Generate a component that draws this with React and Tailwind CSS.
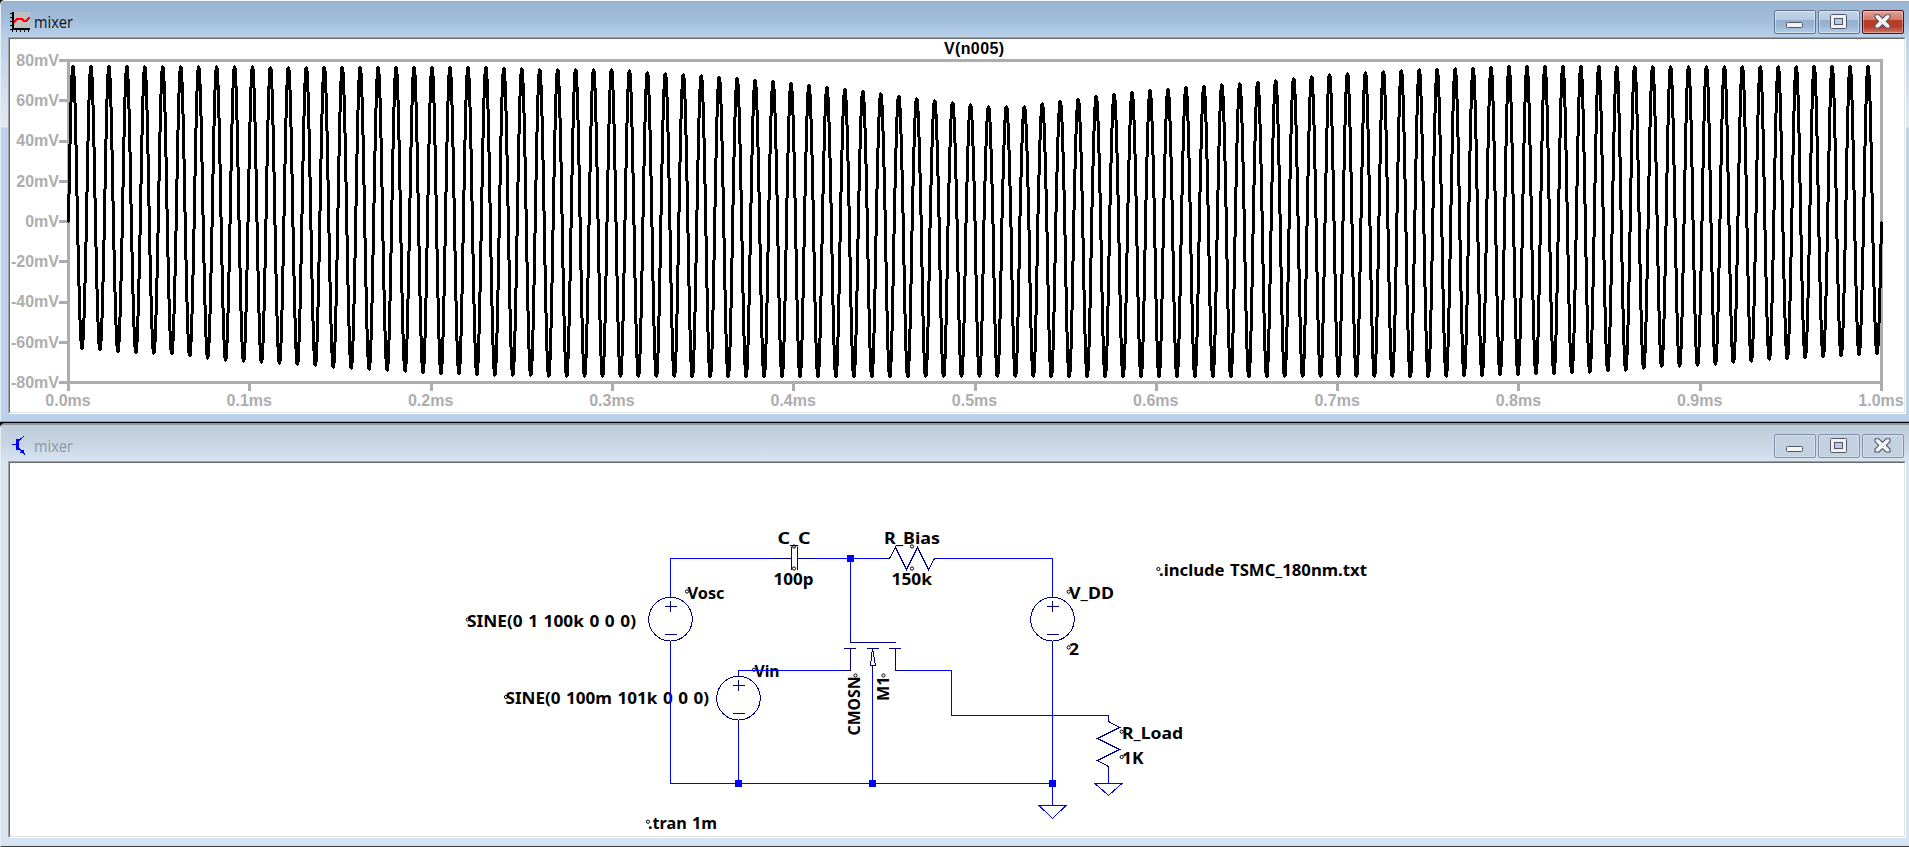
import React from "react";

const SANS = '"Liberation Sans", Arial, sans-serif';
const LABEL = '"Noto Sans", "Open Sans", sans-serif';

/* ---------- window chrome ---------- */

function PlotIcon() {
  return (
    <svg width="20" height="20" viewBox="0 0 20 20" shapeRendering="crispEdges">
      <rect x="4" y="0" width="16" height="17" fill="#c0c0c0" />
      <rect x="2" y="0" width="2" height="18" fill="#000" />
      <rect x="2" y="16" width="18" height="2" fill="#000" />
      {[0, 4, 8, 12, 16].map((y) => (
        <rect key={y} x="0" y={y + 1} width="2" height="1" fill="#000" />
      ))}
      {[2, 6, 10, 14, 18].map((x) => (
        <rect key={x} x={x} y="18" width="1" height="2" fill="#000" />
      ))}
      <path d="M4 10.5 L7.5 6.5 H11.5 L13.5 9 H16 L19.8 5" fill="none" stroke="#f00" strokeWidth="2" />
    </svg>
  );
}

function TransistorIcon() {
  return (
    <svg width="20" height="20" viewBox="0 0 20 20" shapeRendering="crispEdges">
      <path d="M2 9.5 H6 M9 5.5 L14.5 0.5" stroke="#00f" fill="none" />
      <rect x="6" y="4" width="3" height="11" fill="#00f" />
      <path d="M9 13.5 L15 19" stroke="#00f" strokeWidth="1.5" fill="none" />
      <path d="M13 14 L15 19.5 L10 17.5 Z" fill="#00f" />
    </svg>
  );
}

function Glyph({ kind }) {
  return (
    <svg width="18" height="16" viewBox="0 0 18 16">
      {kind === "min" && (
        <rect x="0.5" y="8.5" width="16" height="5" rx="1" fill="#f4f4f4" stroke="#535666" />
      )}
      {kind === "max" && (
        <>
          <rect x="0.5" y="0.5" width="16" height="14" rx="1" fill="#f1f1f1" stroke="#535666" />
          <rect x="4.5" y="4.5" width="8" height="6" fill="#b5c9df" stroke="#535666" />
        </>
      )}
      {kind === "close" && (
        <path
          d="M1 .8 H5 L8.5 4.3 L12 .8 H16 V3.6 L12.3 7.4 L16 11.2 V14 H12 L8.5 10.7 L5 14 H1 V11.2 L4.7 7.4 L1 3.6 Z"
          fill="#f3f3f3"
          stroke="#535666"
          strokeWidth="1.1"
          strokeLinejoin="round"
        />
      )}
    </svg>
  );
}

function CaptionButton({ kind, active }) {
  const skin = !active
    ? "border-[#8391ab] bg-[#c3d1e1] shadow-[inset_0_0_0_1px_rgba(255,255,255,0.3)]"
    : kind === "close"
      ? "border-[#4c1020] bg-[linear-gradient(#e2a396_0%,#d2776a_40%,#b83c28_42%,#b43d29_70%,#d2765f_100%)] shadow-[inset_0_0_0_1px_rgba(255,255,255,0.35)]"
      : "border-[#64748f] bg-[linear-gradient(#c3d5e8_0%,#b4cae2_40%,#94afcd_42%,#9bb7d5_70%,#b4cee8_100%)] shadow-[inset_0_0_0_1px_rgba(255,255,255,0.4)]";
  return (
    <button className={"flex h-6 w-[42px] items-center justify-center rounded-[2px] border " + skin}>
      <Glyph kind={kind} />
    </button>
  );
}

function MdiWindow({ active, icon, title, children }) {
  return (
    <section
      className={
        "flex flex-col overflow-hidden " +
        (active
          ? "h-[421px] rounded-tl-[5px] border-l border-t border-l-[#e9eef4] border-t-[#f4f7fa] bg-[#b9d1ea] bg-[linear-gradient(#b9d1ea_0px,#b9d1ea_38px,#e0eaf6_126px,#b9d1ea_127px)]"
          : "h-[424px] rounded-tl-[5px] border-b border-l border-t-2 border-b-[#3c3f44] border-l-[#e9eef4] border-t-[#8e979f] bg-[#d7e4f2]")
      }
    >
      <header
        className={
          "flex h-9 shrink-0 items-start justify-between pl-[9px] pr-[5px] pt-[9px] " +
          (active
            ? "bg-[linear-gradient(#99b4d1,#a3bedb_55%,#b9d1ea)]"
            : "bg-[linear-gradient(#bfcddb,#c8d6e4_55%,#d7e4f2)]")
        }
      >
        <div className="flex items-start gap-1">
          <span className={active ? "mt-0.5" : "mt-px"}>{icon}</span>
          <h1
            className={
              "origin-left scale-x-[0.91] font-['Open_Sans'] text-base leading-[25px] " +
              (active ? "text-[#101318]" : "text-[#8f979f]")
            }
          >
            {title}
          </h1>
        </div>
        <div className="flex gap-0.5">
          <CaptionButton kind="min" active={active} />
          <CaptionButton kind="max" active={active} />
          <CaptionButton kind="close" active={active} />
        </div>
      </header>
      <div className="ml-[7px] mr-[3px] h-[377px] shrink-0 border border-b-white border-l-[#a0a0a0] border-r-white border-t-[#a0a0a0]">
        <div className="h-full border border-b-[#e3e3e3] border-l-[#696969] border-r-[#e3e3e3] border-t-[#696969] bg-white">
          {children}
        </div>
      </div>
    </section>
  );
}

/* ---------- waveform plot ---------- */

const X0 = 68.5;
const X1 = 1881.5;
const YZERO = 221.5;
const CYCLES = 101;

const CREST = [
  [68, 65], [485, 66], [540, 68], [611, 68], [652, 71], [702, 74], [792, 82], [863, 90], [926, 98],
  [988, 105], [1023, 105], [1059, 100], [1113, 93], [1184, 86], [1256, 81], [1328, 73], [1400, 69],
  [1472, 67], [1510, 65], [1882, 65],
];
const TROUGH = [
  [68, 349], [81, 349.5], [118, 353], [172, 355.5], [225, 361.5], [279, 365], [333, 368.5], [387, 371.5],
  [440, 374.5], [494, 376.5], [602, 378.5], [1410, 378.5], [1500, 376.5], [1572, 374.5], [1626, 371.5],
  [1661, 368.5], [1697, 367.5], [1733, 364.5], [1769, 361], [1805, 359.5], [1841, 357.5], [1882, 354.5],
];

function interpolate(table, x) {
  for (let i = 1; i < table.length; i++) {
    const [xa, ya] = table[i - 1];
    const [xb, yb] = table[i];
    if (x <= xb) return ya + ((yb - ya) * (x - xa)) / (xb - xa);
  }
  return table[table.length - 1][1];
}

function signal(x) {
  const s = Math.sin((2 * Math.PI * CYCLES * (x - X0)) / (X1 - X0));
  return s >= 0
    ? YZERO - s * (YZERO - interpolate(CREST, x) - 1)
    : YZERO - s * (interpolate(TROUGH, x) - 1 - YZERO);
}

/* One three-pixel pen stroke per pixel column, spanning the values the signal takes there. */
function buildTrace() {
  const parts = [];
  for (let c = 68; c <= 1881; c++) {
    const from = Math.max(c, X0);
    const to = Math.min(c + 1, X1);
    let lo = Infinity;
    let hi = -Infinity;
    for (let k = 0; k <= 10; k++) {
      const y = signal(from + ((to - from) * k) / 10);
      lo = Math.min(lo, y);
      hi = Math.max(hi, y);
    }
    const top = Math.round(lo);
    const bottom = Math.max(Math.round(hi), top + 1);
    parts.push(`M${c - 1} ${top}h3V${bottom}h-3Z`);
    parts.push(`M${c} ${top - 1}h1V${bottom + 1}h-1Z`);
  }
  return parts.join("");
}

const TRACE = buildTrace();
const VOLTS = [80, 60, 40, 20, 0, -20, -40, -60, -80];
const TIMES = ["0.0", "0.1", "0.2", "0.3", "0.4", "0.5", "0.6", "0.7", "0.8", "0.9", "1.0"];

function WaveformPlot() {
  return (
    <svg className="block h-full w-full" viewBox="10 39 1894 373">
      <g stroke="#adadad" strokeWidth="3" fill="none" shapeRendering="crispEdges">
        <rect x={X0} y="60.5" width={X1 - X0} height="322" />
        {VOLTS.map((v) => {
          const y = Math.floor(YZERO - v * 2.0125) + 0.5;
          return <path key={v} d={`M59 ${y} H68`} />;
        })}
        {TIMES.map((t, i) => {
          const x = Math.floor(X0 + i * 181.3) + 0.5;
          return <path key={t} d={`M${x} 382 V391`} />;
        })}
      </g>
      <g fontFamily={SANS} fontSize="16" fontWeight="700" fill="#adadad">
        {VOLTS.map((v) => (
          <text key={v} x="59" y={Math.round(YZERO - v * 2.0125 + 5.4)} textAnchor="end">
            {v}mV
          </text>
        ))}
        {TIMES.map((t, i) => (
          <text key={t} x={X0 - 0.5 + i * 181.3} y="406" textAnchor="middle">
            {t}ms
          </text>
        ))}
      </g>
      <text x="944" y="54" fontFamily={SANS} fontSize="16" fontWeight="700" textLength="60">
        V(n005)
      </text>
      <path d={TRACE} fill="#000" shapeRendering="crispEdges" />
    </svg>
  );
}

/* ---------- schematic ---------- */

const LABELS = [
  { t: "C_C", x: 777.5, y: 544, w: 33 },
  { t: "100p", x: 773.5, y: 585, w: 40 },
  { t: "R_Bias", x: 884, y: 544, w: 56 },
  { t: "150k", x: 891.5, y: 585, w: 40.5 },
  { t: "Vosc", x: 687.5, y: 599, w: 37 },
  { t: "SINE(0 1 100k 0 0 0)", x: 467, y: 627, w: 169 },
  { t: "Vin", x: 754.5, y: 677, w: 25 },
  { t: "SINE(0 100m 101k 0 0 0)", x: 505.5, y: 704, w: 203.5 },
  { t: "V_DD", x: 1069, y: 599, w: 45 },
  { t: "2", x: 1069, y: 655, w: 10 },
  { t: "R_Load", x: 1122, y: 739, w: 61 },
  { t: "1K", x: 1122, y: 764, w: 21.5 },
  { t: ".include TSMC_180nm.txt", x: 1159, y: 576, w: 208 },
  { t: ".tran 1m", x: 648, y: 829, w: 69 },
];

const ANCHORS = [
  [794, 546.5], [794, 568.5], [912, 546.5], [912, 568.5], [687, 591.5], [467.7, 619.5], [506, 697],
  [754, 669.7], [855.5, 675.5], [883.5, 675.5], [1068.7, 591.7], [1068.7, 647.5], [1121.7, 731.7],
  [1121.7, 757], [648, 821.7], [1158.4, 569],
];

const NODES = [[850, 558], [738, 783], [872, 783], [1052, 783]];

function Source({ x, y }) {
  return (
    <>
      <circle cx={x} cy={y - 0.3} r="21.8" />
      <path d={`M${x} ${y - 26} V${y - 22} M${x} ${y + 22} V${y + 27}`} />
      <path d={`M${x - 6} ${y - 13} H${x + 6} M${x} ${y - 19} V${y - 8} M${x - 6} ${y + 15} H${x + 6}`} />
    </>
  );
}

function Schematic() {
  return (
    <svg className="block h-full w-full" viewBox="10 463 1894 373">
      <g fontFamily={LABEL} fontSize="16" fontWeight="700" fill="#000" wordSpacing="1">
        {LABELS.map((l) => (
          <text key={l.t} x={l.x} y={l.y} textLength={l.w} lengthAdjust="spacingAndGlyphs">
            {l.t}
          </text>
        ))}
        <text transform="translate(860 735.5) rotate(-90)" textLength="59" lengthAdjust="spacingAndGlyphs">
          CMOSN
        </text>
        <text transform="translate(889 701) rotate(-90)" textLength="24.5" lengthAdjust="spacingAndGlyphs">
          M1
        </text>
      </g>
      <g fill="none" stroke="#000">
        {ANCHORS.map(([x, y]) => (
          <circle key={x + "-" + y} cx={x} cy={y} r="1.6" />
        ))}
      </g>
      <g fill="none" stroke="#0000ff" shapeRendering="crispEdges">
        <path d="M772 558.5 H670.5 V597 M670.5 642 V783.5 H1052.5" />
        <path d="M816 558.5 H884 M850.5 558.5 V638" />
        <path d="M840 670.5 H738.5 V676 M738.5 721 V783" />
        <path d="M906 670.5 H951.5 V715.5 H1108.5 V721" />
        <path d="M872.5 671 V783" />
        <path d="M940 558.5 H1052.5 V597 M1052.5 642 V805 M1108.5 766 V783" />
        <path d="M1039 805.5 H1066 L1052.5 818.5 Z M1095 783.5 H1122 L1108.5 795.5 Z" />
      </g>
      <g fill="none" stroke="#000084" shapeRendering="crispEdges">
        <path d="M772 558.5 H791 M798 558.5 H816 M791.5 547 V570 M797.5 547 V570" />
        <path d="M884 558.5 H889.5 L895.5 547.5 L906.5 569.5 L917.5 547.5 L928.5 569.5 L934.5 558.5 H940" />
        <path d="M1108.5 715 V721.5 L1119.5 727.5 L1097.5 738.5 L1119.5 749.5 L1097.5 760.5 L1108.5 766.5 V771" />
        <path d="M850.5 638 V642.5 H896" />
        <path d="M844 648.5 H856 M867 648.5 H879 M889 648.5 H901" />
        <path d="M850.5 648 V670.5 H840 M895.5 648 V670.5 H906" />
        <path d="M872.5 648 L870.5 665.5 H875.5 L872.5 648 M872.5 665 V671" />
        <Source x={670.5} y={619.5} />
        <Source x={738.5} y={698.5} />
        <Source x={1052.5} y={619.5} />
      </g>
      <g fill="#0000ff">
        {NODES.map(([x, y]) => (
          <rect key={x} x={x - 3} y={y - 3} width="7" height="7" />
        ))}
      </g>
    </svg>
  );
}

export default function App() {
  return (
    <main className="flex h-[847px] w-[1909px] flex-col overflow-hidden bg-[#10151a]">
      <MdiWindow active title="mixer" icon={<PlotIcon />}>
        <WaveformPlot />
      </MdiWindow>
      <div className="h-0.5 shrink-0 border-b border-t border-b-black border-t-[#3cc4de]" />
      <MdiWindow title="mixer" icon={<TransistorIcon />}>
        <Schematic />
      </MdiWindow>
    </main>
  );
}
